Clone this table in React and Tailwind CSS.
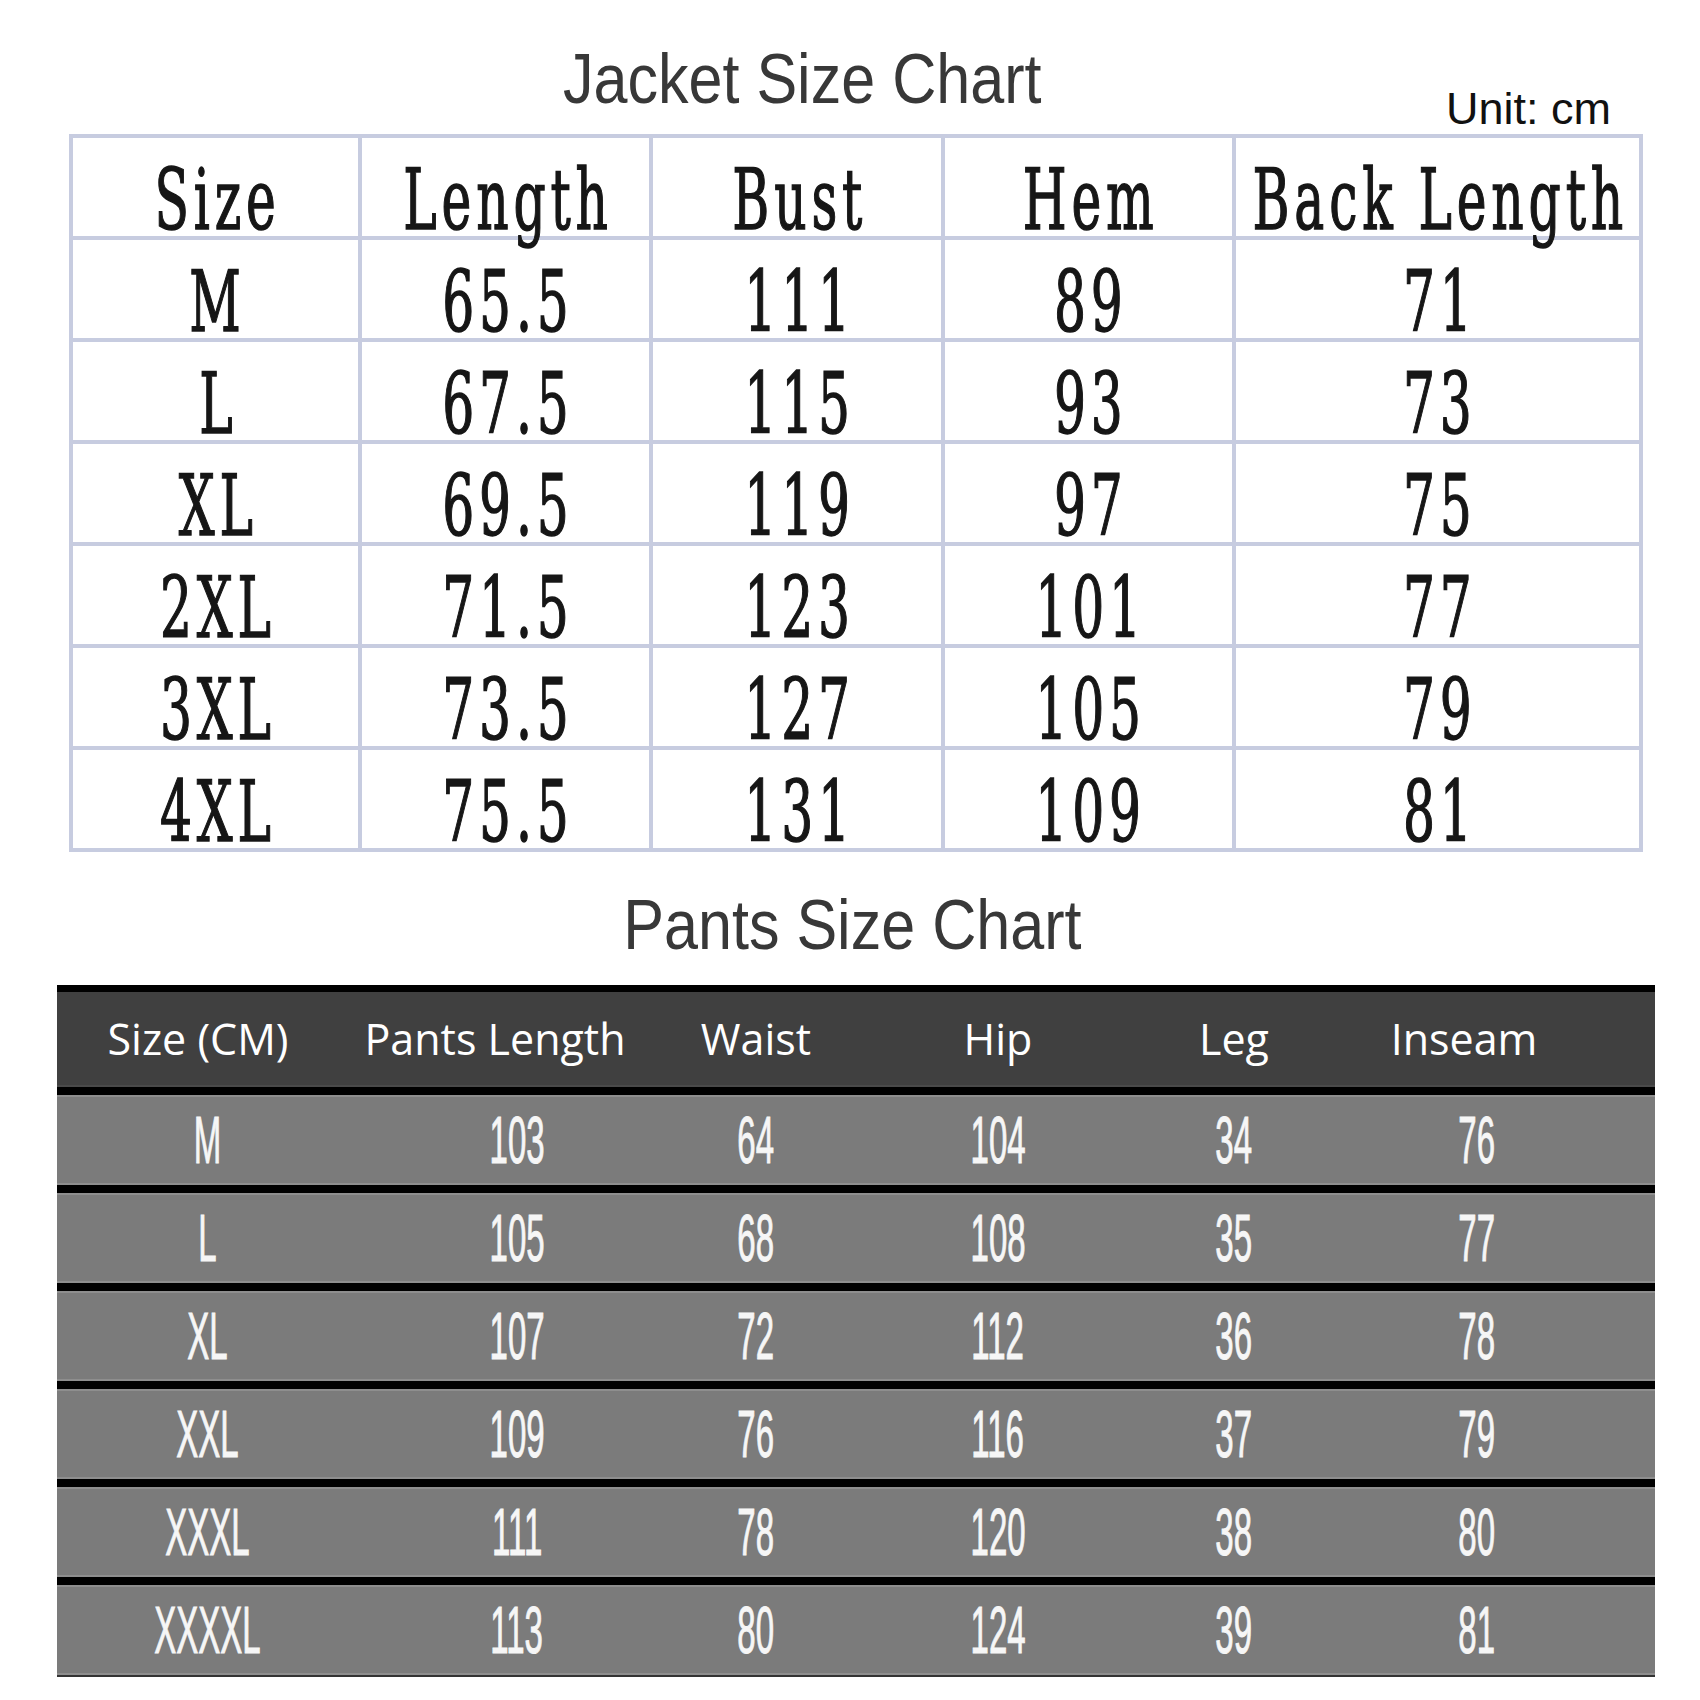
import React from 'react';

const jacketHead = ['Size', 'Length', 'Bust', 'Hem', 'Back Length'];
const jacketRows = [
    ['M', '65.5', '111', '89', '71'],
    ['L', '67.5', '115', '93', '73'],
    ['XL', '69.5', '119', '97', '75'],
    ['2XL', '71.5', '123', '101', '77'],
    ['3XL', '73.5', '127', '105', '79'],
    ['4XL', '75.5', '131', '109', '81'],
];

const pantsHead = ['Size (CM)', 'Pants Length', 'Waist', 'Hip', 'Leg', 'Inseam'];
const pantsRows = [
    ['M', '103', '64', '104', '34', '76'],
    ['L', '105', '68', '108', '35', '77'],
    ['XL', '107', '72', '112', '36', '78'],
    ['XXL', '109', '76', '116', '37', '79'],
    ['XXXL', '111', '78', '120', '38', '80'],
    ['XXXXL', '113', '80', '124', '39', '81'],
];

// small nudges so header and data text sit where the picture has them
const headPad = ['pr-[10px]', 'pr-[22px]', '', '', '', 'pr-[12px]'];
const dataPad = ['pl-[8px]', 'pl-[22px]', '', '', '', 'pl-[14px]'];

const JacketCell = ({ children }) => (
    <div className="h-[102px] border-r-4 border-b-4 border-[#c7cce0] flex items-start justify-center pt-[29px]">
        <span className="inline-block scale-x-[0.6] pl-[8px] tracking-[8px] whitespace-pre text-[84px] leading-[67px] text-[#161616] [-webkit-text-stroke:1.5px_#161616] font-['DejaVu_Serif',serif]">
            {children}
        </span>
    </div>
);

const JacketTable = () => (
    <div className="ml-[69px] w-[1574px] border-l-4 border-t-4 border-[#c7cce0] grid grid-cols-[289px_291px_292px_291px_407px]">
        {jacketHead.map((h) => (
            <JacketCell key={h}>{h}</JacketCell>
        ))}
        {jacketRows.map((row, i) =>
            row.map((v, j) => <JacketCell key={i + '-' + j}>{v}</JacketCell>)
        )}
    </div>
);

const PantsTable = () => (
    <div className="ml-[57px] w-[1598px] bg-black">
        <div className="h-[7px] bg-black" />
        <div className="h-[95px] bg-[#404040] border-b-2 border-[#4a4a4a] grid grid-cols-[292px_314px_186px_298px_174px_298px] items-center">
            {pantsHead.map((h, j) => (
                <div key={h} className={`flex justify-center ${headPad[j]}`}>
                    <span className="text-[43px] leading-none text-white whitespace-nowrap font-['Open_Sans',sans-serif]">
                        {h}
                    </span>
                </div>
            ))}
        </div>
        {pantsRows.map((row, i) => (
            <div key={i} className="pt-[8px] bg-black">
                <div className="h-[90px] bg-[#7b7b7b] border-t-2 border-b-2 border-[#8e8e8e] grid grid-cols-[292px_314px_186px_298px_174px_298px] items-center">
                    {row.map((v, j) => (
                        <div key={j} className={`flex justify-center ${dataPad[j]}`}>
                            <span className="inline-block scale-x-[0.5] text-[66px] leading-none text-[#f6f6f6] [-webkit-text-stroke:1px_#f6f6f6] font-['Liberation_Sans',Arial,sans-serif]">
                                {v}
                            </span>
                        </div>
                    ))}
                </div>
            </div>
        ))}
        <div className="h-[2px] bg-[#333333]" />
    </div>
);

const App = () => {
    return (
        <div className="w-[1700px] h-[1700px] bg-white overflow-hidden font-['Liberation_Sans',Arial,sans-serif]">
            <div className="h-[134px] flex items-start">
                <div className="w-[1446px] pl-[158px] pt-[43px] text-center">
                    <span className="inline-block scale-x-[0.86] text-[71px] leading-none text-[#383838] whitespace-nowrap">
                        Jacket Size Chart
                    </span>
                </div>
                <div className="pt-[86px] text-[45px] leading-none text-[#111111] whitespace-nowrap">
                    Unit: cm
                </div>
            </div>

            <JacketTable />

            <div className="mt-[37px] pl-[4px] text-center">
                <span className="inline-block scale-x-[0.86] text-[71px] leading-none text-[#383838] whitespace-nowrap">
                    Pants Size Chart
                </span>
            </div>

            <div className="mt-[25px]">
                <PantsTable />
            </div>
        </div>
    );
};

export default App;
